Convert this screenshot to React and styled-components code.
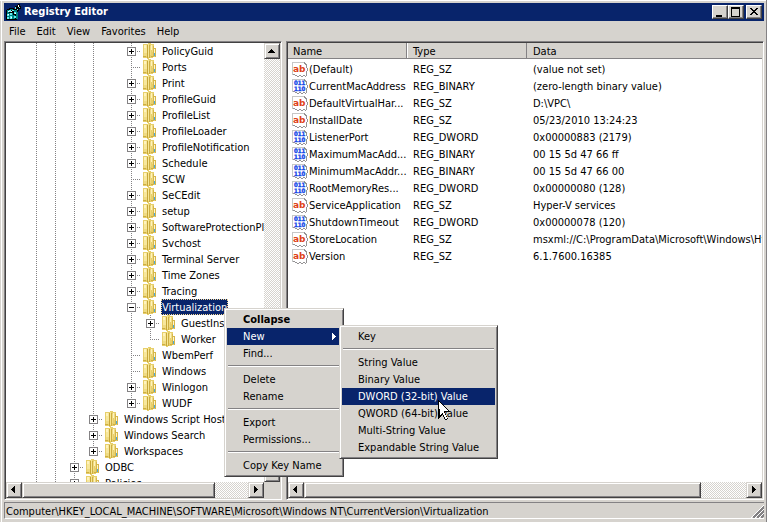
import React from "react";
import styled, { createGlobalStyle, css } from "styled-components";

const face = "#d6d3ce";
const navy = "#08246b";
const shade = "#848284";
const dark = "#424142";

const Global = createGlobalStyle`
  * { box-sizing: border-box; }
  html, body { margin: 0; height: 100%; overflow: hidden; }
  body, button {
    font-family: "DejaVu Sans Condensed", "DejaVu Sans", sans-serif;
    font-size: 11px;
    line-height: 16px;
    color: #000;
  }
  button { margin: 0; padding: 0; border: 0; background: none; text-align: left; }
  ul { list-style: none; margin: 0; padding: 0; }
`;

const raised = css`
  background: ${face};
  border: 1px solid;
  border-color: ${face} ${dark} ${dark} ${face};
  box-shadow: inset 1px 1px #fff, inset -1px -1px ${shade};
`;

const Window = styled.div`
  position: relative;
  display: flex;
  flex-direction: column;
  height: 100vh;
  padding: 3px 3px 3px 4px;
  background: ${face};
  box-shadow: inset -1px 0 ${shade}, inset 0 1px #fff, inset 1px 0 ${face}, inset 2px 0 #fff;
`;

const TitleBar = styled.header`
  display: flex;
  align-items: center;
  height: 18px;
  flex: none;
  padding: 0 2px;
  gap: 2px;
  background: ${navy};
`;

const Title = styled.h1`
  flex: 1;
  margin: 0;
  font-size: 11px;
  line-height: 18px;
  color: #fff;
`;

const CaptionButtons = styled.div`
  display: flex;
`;

const CaptionButton = styled.button`
  ${raised}
  border-color: #fff ${dark} ${dark} #fff;
  box-shadow: inset -1px -1px ${shade};
  width: 16px;
  height: 14px;
  margin-left: ${(p) => (p.$apart ? "2px" : "0")};
  svg { display: block; }
`;

const MenuBar = styled.nav`
  display: flex;
  flex: none;
  gap: 1px;
  height: 20px;
`;

const MenuBarItem = styled.button`
  padding: 2px 5px 0;
  line-height: 18px;
`;

const Panes = styled.main`
  display: flex;
  flex: 1;
  min-height: 0;
  gap: 4px;
`;

const Pane = styled.section`
  display: grid;
  grid-template-columns: ${(p) => (p.$tree ? "minmax(0, 1fr) 16px" : "minmax(0, 1fr)")};
  grid-template-rows: minmax(0, 1fr) 16px;
  flex: ${(p) => (p.$tree ? "0 0 278px" : "1 1 0")};
  min-width: 0;
  background: ${face};
  border: 1px solid;
  border-color: ${shade} #fff #fff ${shade};
  box-shadow: inset 1px 1px ${dark};
  padding: 1px;
`;

const Viewport = styled.div`
  overflow: hidden;
  background: #fff;
`;

const TreeRow = styled.li`
  display: flex;
  height: 16px;
  padding-left: 21px;
  white-space: nowrap;
`;

const vDots = `repeating-linear-gradient(180deg, ${shade} 0 1px, transparent 1px 2px)`;
const hDots = `repeating-linear-gradient(90deg, ${shade} 0 1px, transparent 1px 2px)`;

const Guide = styled.span`
  flex: none;
  display: grid;
  place-items: center;
  width: 19px;
  height: 16px;
  background-repeat: no-repeat;
  background-image: ${(p) => (p.$line ? vDots : "none")}, ${(p) => (p.$branch ? hDots : "none")};
  background-size: 1px ${(p) => (p.$last ? "8px" : "16px")}, 10px 1px;
  background-position: 9px 0, 9px 8px;
`;

const Expander = styled.button`
  display: block;
  width: 9px;
  height: 9px;
  border: 1px solid ${shade};
  background: #fff;
  svg { display: block; }
`;

const FolderSvg = styled.svg`
  flex: none;
  width: 16px;
  height: 16px;
  margin-right: 4px;
`;

const TreeLabel = styled.span`
  height: 16px;
  line-height: 16px;
  border: 1px ${(p) => (p.$selected ? "dotted #f7db94" : "solid transparent")};
  background: ${(p) => (p.$selected ? navy : "transparent")};
  color: ${(p) => (p.$selected ? "#fff" : "#000")};
`;

const ScrollBar = styled.div`
  display: flex;
  flex-direction: ${(p) => (p.$vertical ? "column" : "row")};
  background: conic-gradient(#fff 25%, ${face} 0 50%, #fff 0 75%, ${face} 0) 0 0 / 2px 2px;
`;

const ScrollButton = styled.button`
  ${raised}
  flex: none;
  width: 16px;
  height: 16px;
  svg { display: block; margin: -1px; }
`;

const Thumb = styled.div`
  ${raised}
  flex: ${(p) => p.$size} 0 0;
`;

const Track = styled.div`
  flex: ${(p) => p.$size} 0 0;
`;

const Table = styled.table`
  width: 100%;
  table-layout: fixed;
  border-collapse: separate;
  border-spacing: 0;
  tbody::before { content: ""; display: block; height: 2px; }
`;

const Col = styled.col`
  width: ${(p) => p.$w || "auto"};
`;

const HeadCell = styled.th`
  height: 16px;
  padding: 2px 6px 0 ${(p) => (p.$first ? "5px" : "6px")};
  line-height: 13px;
  font-weight: normal;
  text-align: left;
  background: ${face};
  border-bottom: 1px solid ${shade};
  box-shadow: ${(p) => (p.$end ? "none" : `inset -1px 0 ${shade}`)}${(p) => (p.$first || p.$end ? "" : ", inset 1px 0 #fff")};
`;

const Cell = styled.td`
  height: 17px;
  padding: 0 0 0 ${(p) => (p.$name ? "4px" : "6px")};
  line-height: 17px;
  overflow: hidden;
  white-space: nowrap;
`;

const NameBox = styled.div`
  display: flex;
  align-items: center;
  gap: 1px;
  height: 17px;
  svg { flex: none; }
`;

const StatusBar = styled.footer`
  display: flex;
  flex: none;
  height: 17px;
  margin-top: 2px;
  border-top: 1px solid ${shade};
  border-left: 1px solid ${shade};
  border-bottom: 1px solid #fff;
  padding-left: 1px;
  line-height: 17px;
  white-space: nowrap;
`;

const StatusText = styled.span`
  flex: 1;
  min-width: 0;
  overflow: hidden;
`;

const Popup = styled.div`
  position: absolute;
  ${raised}
  padding: 2px;
  z-index: 2;
`;

const ContextMenu = styled(Popup)`
  left: 224px;
  top: 308px;
  width: 120px;
`;

const SubMenu = styled(Popup)`
  left: calc(100% - 2px);
  top: -3px;
  width: 159px;
`;

const ItemHolder = styled.div`
  position: relative;
`;

const MenuItem = styled.button`
  display: flex;
  align-items: center;
  justify-content: space-between;
  width: 100%;
  height: 17px;
  padding: 0 5px 0 16px;
  line-height: 17px;
  white-space: nowrap;
  font-weight: ${(p) => (p.$bold ? "bold" : "normal")};
  background: ${(p) => (p.$active ? navy : "transparent")};
  color: ${(p) => (p.$active ? "#fff" : "#000")};
`;

const Separator = styled.hr`
  height: 2px;
  margin: 3px 1px 4px;
  border: 0;
  border-top: 1px solid ${shade};
  border-bottom: 1px solid #fff;
`;

const Pointer = styled.svg`
  position: absolute;
  left: 98px;
  top: 74px;
  width: 12px;
  height: 21px;
  pointer-events: none;
`;

const Folder = () => (
  <FolderSvg viewBox="0 0 16 16" shapeRendering="crispEdges" aria-hidden="true">
    <path fill="#e7cf6b" d="M2 1h5v-1h3v1h3v4h2v9h-3v1h-4v1h-2v-1h-4z" />
    <path fill="#f7e79c" d="M3 2h3v8h-3z" />
    <path fill="#fff3bd" d="M3 2h2v3h-2zM10 2h1v5h-1z" />
    <path fill="#efdb84" d="M3 10h3v3h-3zM9 3h1v9h-1zM11 2h1v7h-1z" />
    <path fill="#c6a639" d="M6 2h1v13h-1z" />
    <path fill="#f7e794" d="M7 1h1v13h-1z" />
    <path fill="#ceae42" d="M8 2h1v13h-1zM2 13h3v1h-3zM10 13h3v1h-3z" />
    <path fill="#d6b64a" d="M12 3h1v11h-1zM13 5h2v1h-2zM14 6h1v8h-1z" />
    <path fill="#fff7ce" d="M13 6h1v4h-1z" />
    <path fill="#4aaade" d="M13 10h1v3h-1z" />
  </FolderSvg>
);

const ValueIcon = ({ binary }) => (
  <svg width="16" height="16" viewBox="0 0 16 16" aria-hidden="true">
    <g shapeRendering="crispEdges">
      <path fill="#fff" d="M0 0h12l3 3v12h-2v-1h-2v1h-2v-1h-3v1h-2v-1h-2v-1h-2z" />
      <path fill="#c6c7c6" d="M0 0h12v1h-11v12h-1z" />
      <path
        fill="#949294"
        d="M12 0h1v1h1v1h1v1h-2v-1h-1zM14 3h1v3h-1zM15 6h1v3h-1zM14 9h1v5h-1zM13 14h1v1h-1zM11 13h2v1h-2zM9 14h2v1h-2zM7 13h2v1h-2zM5 14h2v1h-2zM3 13h2v1h-2zM1 12h2v1h-2z"
      />
    </g>
    {binary ? (
      <g
        fill="#184ae7"
        stroke="#184ae7"
        strokeWidth="0.4"
        fontFamily="DejaVu Sans Condensed"
        fontWeight="bold"
        fontSize="6"
      >
        <text x="2" y="6">011</text>
        <text x="2" y="12">110</text>
      </g>
    ) : (
      <text x="1" y="10" fill="#de4118" fontFamily="DejaVu Sans" fontWeight="bold" fontSize="9">ab</text>
    )}
  </svg>
);

const AppIcon = () => (
  <svg width="16" height="16" viewBox="0 0 16 16" shapeRendering="crispEdges" aria-hidden="true">
    <path fill="#000" d="M0 6h1v-1h2v-1h5v1h1v-3h2v-1h1v-1h2v2h1v3h-2v2h-1v8h-1v1h-11z" />
    <path fill="#008284" d="M1 6h2v3h-2zM8 6h3v2h-3zM10 8h2v7h-2zM4 5h3v1h-3zM7 11h2v4h-2zM1 9h6v6h-6z" />
    <path
      fill="#63efef"
      d="M3 6h2v2h-2zM6 6h2v1h-2zM1 10h2v2h-2zM4 9h2v2h-2zM1 13h2v2h-2zM4 12h2v3h-2zM8 8h2v2h-2zM8 12h2v2h-2zM9 3h1v2h-1zM13 3h1v1h-1zM11 5h1v1h-1z"
    />
    <path fill="#fff" d="M2 7h1v1h-1zM5 7h1v1h-1zM2 10h1v1h-1zM5 13h1v1h-1zM9 9h1v1h-1zM12 1h1v2h-1z" />
  </svg>
);

const arrows = {
  up: "M7 6h1v1h1v1h1v1h1v1h-7v-1h1v-1h1v-1h1z",
  down: "M4 6h7v1h-1v1h-1v1h-1v1h-1v-1h-1v-1h-1v-1h-1z",
  left: "M9 4v7h-1v-1h-1v-1h-1v-1h-1v-1h1v-1h1v-1h1v-1z",
  right: "M6 4v7h1v-1h1v-1h1v-1h1v-1h-1v-1h-1v-1h-1v-1z",
};

const Arrow = ({ dir }) => (
  <ScrollButton aria-label={`Scroll ${dir}`}>
    <svg width="16" height="16" viewBox="0 0 16 16" shapeRendering="crispEdges">
      <path d={arrows[dir]} />
    </svg>
  </ScrollButton>
);

const captions = [
  ["Minimize", "M3 9h6v2h-6z"],
  ["Maximize", "M2 1h9v10h-9zM3 3v7h7v-7z"],
  ["Close", "M3 2h2v1h1v1h2v-1h1v-1h2v1h-1v1h-1v1h-1v1h1v1h1v1h1v1h-2v-1h-1v-1h-2v1h-1v1h-2v-1h1v-1h1v-1h1v-1h-1v-1h-1v-1h-1z"],
];

/* [label, depth, state, last]: state "+" collapsed, "-" expanded, "" leaf */
const tree = [
  ["PolicyGuid", 5, "+"],
  ["Ports", 5, ""],
  ["Print", 5, "+"],
  ["ProfileGuid", 5, "+"],
  ["ProfileList", 5, "+"],
  ["ProfileLoader", 5, "+"],
  ["ProfileNotification", 5, "+"],
  ["Schedule", 5, "+"],
  ["SCW", 5, ""],
  ["SeCEdit", 5, "+"],
  ["setup", 5, "+"],
  ["SoftwareProtectionPlatform", 5, "+"],
  ["Svchost", 5, "+"],
  ["Terminal Server", 5, "+"],
  ["Time Zones", 5, "+"],
  ["Tracing", 5, "+"],
  ["Virtualization", 5, "-"],
  ["GuestIns", 6, "+"],
  ["Worker", 6, "", true],
  ["WbemPerf", 5, ""],
  ["Windows", 5, ""],
  ["Winlogon", 5, "+"],
  ["WUDF", 5, "+", true],
  ["Windows Script Host", 3, "+"],
  ["Windows Search", 3, "+"],
  ["Workspaces", 3, "+", true],
  ["ODBC", 2, "+"],
  ["Policies", 2, "+"],
];

const values = [
  ["(Default)", "REG_SZ", "(value not set)"],
  ["CurrentMacAddress", "REG_BINARY", "(zero-length binary value)"],
  ["DefaultVirtualHar...", "REG_SZ", "D:\\VPC\\"],
  ["InstallDate", "REG_SZ", "05/23/2010 13:24:23"],
  ["ListenerPort", "REG_DWORD", "0x00000883 (2179)"],
  ["MaximumMacAdd...", "REG_BINARY", "00 15 5d 47 66 ff"],
  ["MinimumMacAddr...", "REG_BINARY", "00 15 5d 47 66 00"],
  ["RootMemoryRes...", "REG_DWORD", "0x00000080 (128)"],
  ["ServiceApplication", "REG_SZ", "Hyper-V services"],
  ["ShutdownTimeout", "REG_DWORD", "0x00000078 (120)"],
  ["StoreLocation", "REG_SZ", "msxml://C:\\ProgramData\\Microsoft\\Windows\\Hyper-V"],
  ["Version", "REG_SZ", "6.1.7600.16385"],
];

const newItems = [
  "Key",
  null,
  "String Value",
  "Binary Value",
  "DWORD (32-bit) Value",
  "QWORD (64-bit) Value",
  "Multi-String Value",
  "Expandable String Value",
];

const keyItems = ["Collapse", "New", "Find...", null, "Delete", "Rename", null, "Export", "Permissions...", null, "Copy Key Name"];

/* The ancestor at this depth is the last of its siblings, so no line runs past it. */
const closedDepth = 4;

const TreeNode = ({ label, depth, state, last }) => (
  <TreeRow role="treeitem" aria-selected={state === "-"}>
    {Array.from({ length: depth }, (_, i) => (
      <Guide key={i} $line={i !== closedDepth} />
    ))}
    <Guide $line $branch $last={last}>
      {state && (
        <Expander aria-label={state === "+" ? `Expand ${label}` : `Collapse ${label}`}>
          <svg width="7" height="7" viewBox="0 0 7 7" shapeRendering="crispEdges">
            <path d={state === "+" ? "M1 3h5v1h-5zM3 1h1v5h-1z" : "M1 3h5v1h-5z"} />
          </svg>
        </Expander>
      )}
    </Guide>
    <Folder />
    <TreeLabel $selected={state === "-"}>{label}</TreeLabel>
  </TreeRow>
);

export default function App() {
  return (
    <Window>
      <Global />
      <TitleBar>
        <AppIcon />
        <Title>Registry Editor</Title>
        <CaptionButtons>
          {captions.map(([name, d]) => (
            <CaptionButton key={name} aria-label={name} $apart={name === "Close"}>
              <svg width="14" height="12" viewBox="0 0 14 12" shapeRendering="crispEdges">
                <path fillRule="evenodd" d={d} />
              </svg>
            </CaptionButton>
          ))}
        </CaptionButtons>
      </TitleBar>
      <MenuBar>
        {["File", "Edit", "View", "Favorites", "Help"].map((m) => (
          <MenuBarItem key={m}>{m}</MenuBarItem>
        ))}
      </MenuBar>
      <Panes>
        <Pane $tree>
          <Viewport>
            <ul role="tree" aria-label="Registry keys">
              {tree.map(([label, depth, state, last]) => (
                <TreeNode key={label} label={label} depth={depth} state={state} last={last} />
              ))}
            </ul>
          </Viewport>
          <ScrollBar $vertical>
            <Arrow dir="up" />
            <Track $size={290} />
            <Thumb $size={60} />
            <Track $size={57} />
            <Arrow dir="down" />
          </ScrollBar>
          <ScrollBar>
            <Arrow dir="left" />
            <Thumb $size={193} />
            <Track $size={33} />
            <Arrow dir="right" />
          </ScrollBar>
        </Pane>
        <Pane>
          <Viewport>
            <Table>
              <colgroup>
                <Col $w="119px" />
                <Col $w="120px" />
                <Col />
              </colgroup>
              <thead>
                <tr>
                  <HeadCell $first>Name</HeadCell>
                  <HeadCell>Type</HeadCell>
                  <HeadCell $end>Data</HeadCell>
                </tr>
              </thead>
              <tbody>
                {values.map(([name, type, data]) => (
                  <tr key={name}>
                    <Cell $name>
                      <NameBox>
                        <ValueIcon binary={type !== "REG_SZ"} />
                        <span>{name}</span>
                      </NameBox>
                    </Cell>
                    <Cell>{type}</Cell>
                    <Cell>{data}</Cell>
                  </tr>
                ))}
              </tbody>
            </Table>
          </Viewport>
          <ScrollBar>
            <Arrow dir="left" />
            <Thumb $size={397} />
            <Track $size={45} />
            <Arrow dir="right" />
          </ScrollBar>
        </Pane>
      </Panes>
      <StatusBar>
        <StatusText>
          Computer\HKEY_LOCAL_MACHINE\SOFTWARE\Microsoft\Windows NT\CurrentVersion\Virtualization
        </StatusText>
        <svg width="13" height="15" viewBox="0 0 13 15" shapeRendering="crispEdges" aria-hidden="true">
          <path stroke="#fff" d="M0 15L13 2M4 15L13 6M8 15L13 10" />
          <path stroke={shade} strokeWidth="2" d="M2 15L13 4M6 15L13 8M10 15L13 12" />
        </svg>
      </StatusBar>
      <ContextMenu role="menu">
        {keyItems.map((item, i) =>
          item === null ? (
            <Separator key={i} />
          ) : (
            <ItemHolder key={item}>
              <MenuItem role="menuitem" $bold={item === "Collapse"} $active={item === "New"}>
                {item}
                {item === "New" && (
                  <svg width="4" height="7" viewBox="0 0 4 7" shapeRendering="crispEdges">
                    <path fill="#fff" d="M0 0h1v1h1v1h1v1h1v1h-1v1h-1v1h-1v1h-1z" />
                  </svg>
                )}
              </MenuItem>
              {item === "New" && (
                <SubMenu role="menu">
                  {newItems.map((sub, j) =>
                    sub === null ? (
                      <Separator key={j} />
                    ) : (
                      <MenuItem key={sub} role="menuitem" $active={sub.startsWith("DWORD")}>
                        {sub}
                      </MenuItem>
                    )
                  )}
                  <Pointer viewBox="0 0 12 21" shapeRendering="crispEdges" aria-hidden="true">
                    <path fill="#000" d="M0 0h1v1h1v1h1v1h1v1h1v1h1v1h1v1h1v1h1v1h1v1h1v1h1v1h-5v2h1v2h1v2h1v1h-1v1h-2v-1h-1v-2h-1v-2h-1v1h-1v1h-1v1h-1v1h-1z" />
                    <path fill="#fff" d="M1 2h1v1h1v1h1v1h1v1h1v1h1v1h1v1h1v1h1v1h-4v2h1v2h1v2h1v2h-2v-2h-1v-2h-1v-2h-1v1h-1v1h-1z" />
                  </Pointer>
                </SubMenu>
              )}
            </ItemHolder>
          )
        )}
      </ContextMenu>
    </Window>
  );
}
